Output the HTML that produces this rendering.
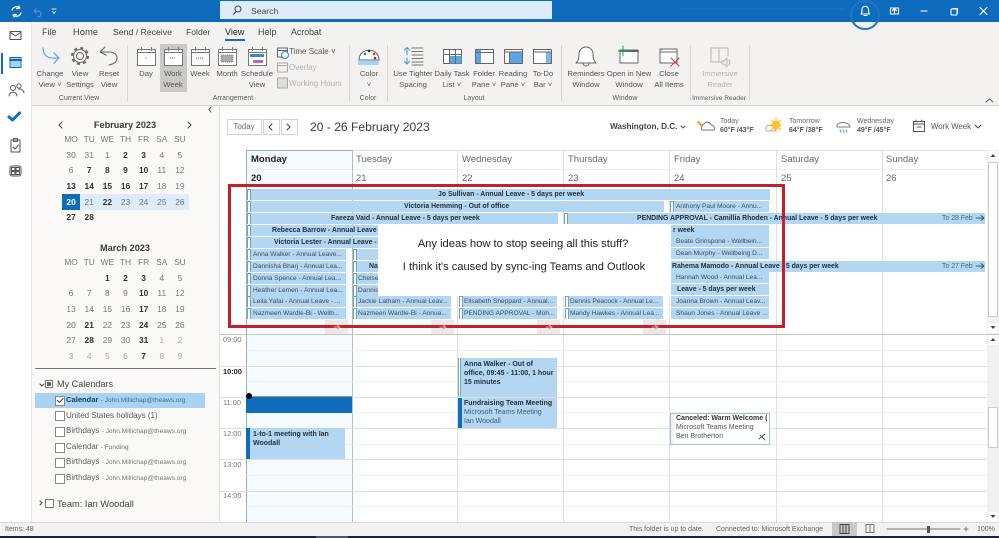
<!DOCTYPE html>
<html><head><meta charset="utf-8"><style>
html,body{margin:0;padding:0;background:#fff}
#p{position:relative;width:999px;height:538px;overflow:hidden;font-family:"Liberation Sans",sans-serif;color:#444;background:#fff;filter:blur(.3px)}
#p div{position:absolute}
.t{position:absolute;white-space:nowrap;line-height:12px}
.c{transform:translateX(-50%);text-align:center}
.tab{font-size:9px;top:26px;color:#444}
.r{font-size:7.7px;color:#555;line-height:11px;text-align:center;transform:translateX(-50%);white-space:nowrap}
.gl{font-size:7px;top:93px;color:#605e5c}
.dis{color:#b5b3b1}
.m{display:flex;left:62px;width:127px;height:15px;font-size:8.4px;color:#777;line-height:15px;text-align:center}
.m span,.m b{flex:1}
.m b{color:#323130}
.m i{flex:1;font-style:normal;color:#aaa}
.h{font-size:9.5px;top:154px;color:#666}
.d{font-size:9.5px;top:173px;color:#666}
.ln{background:#e1dfdd}
.b{background:#b3d7f3;height:11px;overflow:hidden;font-size:6.6px;line-height:11px;color:#3c4c5c;white-space:nowrap}
.bb{font-weight:bold;color:#22303e;font-size:6.9px}
.k{left:0;top:0;width:2px;height:10px;background:#fff;border:1px solid #6fa3b5;box-sizing:content-box}
.tm{font-size:7.4px;left:223px;color:#777}
.cal{font-size:8px;left:66px;color:#605e5c}
.cal small{font-size:6.6px;color:#7a7876}
.cb{left:55px;width:8px;height:8px;border:1px solid #8a8886;background:#fff}
.st{font-size:7px;top:524px;color:#666}
.ev{font-size:7px;line-height:9px;color:#22303e}
</style></head><body><div id="p">

<!-- title bar -->
<div style="left:0;top:0;width:999px;height:22px;background:#0f6cbd"></div>
<div style="left:220px;top:1px;width:332px;height:18px;background:#deecf9"></div>
<div class="t" style="left:251px;top:5px;font-size:8.6px;color:#444">Search</div>

<!-- rail -->
<div style="left:0;top:22px;width:31px;height:500px;background:#fff"></div>
<div style="left:31px;top:22px;width:1px;height:500px;background:#e6e4e2"></div>
<div style="left:1px;top:53px;width:2px;height:21px;background:#0f6cbd"></div>

<!-- ribbon -->
<div style="left:32px;top:22px;width:967px;height:83px;background:#f3f2f1"></div>
<div style="left:32px;top:105px;width:967px;height:1px;background:#d2d0ce"></div>
<div style="left:225px;top:39px;width:20px;height:2px;background:#106ebe"></div>
<div class="t tab" style="left:42px">File</div>
<div class="t tab" style="left:73px;font-size:9.4px">Home</div>
<div class="t tab" style="left:113px;font-size:8.7px">Send / Receive</div>
<div class="t tab" style="left:186px;font-size:8.6px">Folder</div>
<div class="t tab" style="left:225px;color:#222">View</div>
<div class="t tab" style="left:258px">Help</div>
<div class="t tab" style="left:291px;font-size:8.8px">Acrobat</div>

<div style="left:160px;top:44px;width:27px;height:48px;background:#cbc9c7"></div>
<div class="ln" style="left:127px;top:45px;width:1px;height:56px;background:#d8d6d4"></div>
<div class="ln" style="left:349px;top:45px;width:1px;height:56px;background:#d8d6d4"></div>
<div class="ln" style="left:387px;top:45px;width:1px;height:56px;background:#d8d6d4"></div>
<div class="ln" style="left:561px;top:45px;width:1px;height:56px;background:#d8d6d4"></div>
<div class="ln" style="left:690px;top:45px;width:1px;height:56px;background:#d8d6d4"></div>
<div class="ln" style="left:749px;top:45px;width:1px;height:56px;background:#d8d6d4"></div>

<div class="r" style="left:50px;top:68px">Change<br>View ˅</div>
<div class="r" style="left:80px;top:68px">View<br>Settings</div>
<div class="r" style="left:109px;top:68px">Reset<br>View</div>
<div class="r" style="left:146px;top:68px">Day</div>
<div class="r" style="left:173px;top:68px">Work<br>Week</div>
<div class="r" style="left:200px;top:68px">Week</div>
<div class="r" style="left:227px;top:68px">Month</div>
<div class="r" style="left:257px;top:68px">Schedule<br>View</div>
<div class="t" style="left:289px;top:46px;font-size:8px;color:#555">Time Scale ˅</div>
<div class="t dis" style="left:289px;top:62px;font-size:8px">Overlay</div>
<div class="t dis" style="left:289px;top:78px;font-size:8px">Working Hours</div>
<div class="r" style="left:369px;top:68px">Color<br>˅</div>
<div class="r" style="left:413px;top:68px">Use Tighter<br>Spacing</div>
<div class="r" style="left:452px;top:68px">Daily Task<br>List ˅</div>
<div class="r" style="left:484px;top:68px">Folder<br>Pane ˅</div>
<div class="r" style="left:513px;top:68px">Reading<br>Pane ˅</div>
<div class="r" style="left:543px;top:68px">To-Do<br>Bar ˅</div>
<div class="r" style="left:586px;top:68px">Reminders<br>Window</div>
<div class="r" style="left:629px;top:68px">Open in New<br>Window</div>
<div class="r" style="left:669px;top:68px">Close<br>All Items</div>
<div class="r dis" style="left:720px;top:68px">Immersive<br>Reader</div>
<div class="t gl c" style="left:79px">Current View</div>
<div class="t gl c" style="left:233px">Arrangement</div>
<div class="t gl c" style="left:368px">Color</div>
<div class="t gl c" style="left:474px">Layout</div>
<div class="t gl c" style="left:625px">Window</div>
<div class="t gl c" style="left:719px;font-size:6.6px">Immersive Reader</div>

<!-- sidebar -->
<div style="left:32px;top:106px;width:188px;height:416px;background:#faf9f8"></div>
<div style="left:219px;top:106px;width:1px;height:416px;background:#e1dfdd"></div>
<div class="t c" style="left:125px;top:119px;font-size:9.2px;font-weight:bold;color:#3b3a39">February 2023</div>
<div class="m" style="top:132px"><span>MO</span><span>TU</span><span>WE</span><span>TH</span><span>FR</span><span>SA</span><span>SU</span></div>
<div class="m" style="top:148px"><span>30</span><span>31</span><span>1</span><b>2</b><b>3</b><span>4</span><span>5</span></div>
<div class="m" style="top:163px"><span>6</span><b>7</b><b>8</b><b>9</b><b>10</b><span>11</span><span>12</span></div>
<div class="m" style="top:179px"><b>13</b><b>14</b><b>15</b><b>16</b><b>17</b><span>18</span><span>19</span></div>
<div style="left:62px;top:194px;width:127px;height:16px;background:#deecf9"></div>
<div style="left:62px;top:194px;width:18px;height:16px;background:#0f6cbd"></div>
<div class="m" style="top:195px"><b style="color:#fff">20</b><span>21</span><b>22</b><span>23</span><span>24</span><span>25</span><span>26</span></div>
<div class="m" style="top:210px"><b>27</b><b>28</b><span></span><span></span><span></span><span></span><span></span></div>
<div class="t c" style="left:125px;top:242px;font-size:9.2px;font-weight:bold;color:#3b3a39">March 2023</div>
<div class="m" style="top:255px"><span>MO</span><span>TU</span><span>WE</span><span>TH</span><span>FR</span><span>SA</span><span>SU</span></div>
<div class="m" style="top:271px"><span></span><span></span><b>1</b><b>2</b><b>3</b><span>4</span><span>5</span></div>
<div class="m" style="top:286px"><span>6</span><span>7</span><span>8</span><span>9</span><b>10</b><span>11</span><span>12</span></div>
<div class="m" style="top:302px"><span>13</span><span>14</span><span>15</span><span>16</span><b>17</b><span>18</span><span>19</span></div>
<div class="m" style="top:318px"><span>20</span><b>21</b><span>22</span><span>23</span><b>24</b><span>25</span><span>26</span></div>
<div class="m" style="top:333px"><span>27</span><b>28</b><span>29</span><span>30</span><b>31</b><i>1</i><i>2</i></div>
<div class="m" style="top:349px"><i>3</i><i>4</i><i>5</i><i>6</i><b>7</b><i>8</i><i>9</i></div>
<div style="left:35px;top:368px;width:181px;height:1px;background:#777"></div>

<div class="t" style="left:57px;top:378px;font-size:9.1px;color:#444">My Calendars</div>
<div style="left:35px;top:393px;width:170px;height:15px;background:#a9d3f2"></div>
<div class="cb" style="top:396px"></div><div class="cb" style="top:411px"></div><div class="cb" style="top:427px"></div><div class="cb" style="top:443px"></div><div class="cb" style="top:458px"></div><div class="cb" style="top:474px"></div>
<div class="t cal" style="top:394px;font-weight:bold;color:#1f3a52;font-size:7.6px">Calendar <small style="font-weight:normal;color:#466a88">- John.Millichap@theaws.org</small></div>
<div class="t cal" style="top:410px">United States holidays (1)</div>
<div class="t cal" style="top:425px">Birthdays <small>- John.Millichap@theaws.org</small></div>
<div class="t cal" style="top:441px">Calendar <small>- Funding</small></div>
<div class="t cal" style="top:456px">Birthdays <small>- John.Millichap@theaws.org</small></div>
<div class="t cal" style="top:472px">Birthdays <small>- John.Millichap@theaws.org</small></div>
<div class="t" style="left:57px;top:498px;font-size:9.3px;color:#444">Team: Ian Woodall</div>

<!-- nav row -->
<div style="left:227px;top:119px;width:33px;height:14px;border:1px solid #d5d3d1"></div>
<div style="left:263px;top:119px;width:15px;height:14px;border:1px solid #d5d3d1"></div>
<div style="left:281px;top:119px;width:15px;height:14px;border:1px solid #d5d3d1"></div>
<div class="t c" style="left:244px;top:121px;font-size:8px;color:#666">Today</div>
<div class="t" style="left:310px;top:121px;font-size:12.1px;color:#3b3a39">20 - 26 February 2023</div>
<div class="t" style="left:610px;top:121px;font-size:8.2px;font-weight:bold;color:#444">Washington, D.C.</div>
<div class="t" style="left:720px;top:116px;font-size:7px;color:#666">Today</div>
<div class="t" style="left:720px;top:125px;font-size:7px;font-weight:bold;color:#555">60°F /43°F</div>
<div class="t" style="left:789px;top:116px;font-size:7px;color:#666">Tomorrow</div>
<div class="t" style="left:789px;top:125px;font-size:7px;font-weight:bold;color:#555">64°F /38°F</div>
<div class="t" style="left:857px;top:116px;font-size:7px;color:#666">Wednesday</div>
<div class="t" style="left:857px;top:125px;font-size:7px;font-weight:bold;color:#555">49°F /45°F</div>
<div class="t" style="left:931px;top:121px;font-size:7.8px;color:#555">Work Week</div>

<!-- grid -->
<div style="left:246px;top:150px;width:106px;height:372px;background:#f5faff"></div>
<div style="left:246px;top:150px;width:741px;height:1px;background:#e1dfdd"></div>
<div style="left:246px;top:169px;width:741px;height:1px;background:#eeeeee"></div>
<div style="left:246px;top:150px;width:106px;height:1px;background:#8fb2bd"></div>
<div style="left:246px;top:150px;width:1px;height:372px;background:#8fb2bd"></div>
<div style="left:352px;top:150px;width:1px;height:372px;background:#a9c0c6"></div>
<div class="ln" style="left:457px;top:150px;width:1px;height:372px"></div>
<div class="ln" style="left:563px;top:150px;width:1px;height:372px"></div>
<div class="ln" style="left:669px;top:150px;width:1px;height:372px"></div>
<div class="ln" style="left:776px;top:150px;width:1px;height:372px"></div>
<div class="ln" style="left:882px;top:150px;width:1px;height:372px"></div>
<div class="t h" style="left:251px;font-weight:bold;color:#222">Monday</div>
<div class="t h" style="left:356px">Tuesday</div>
<div class="t h" style="left:462px">Wednesday</div>
<div class="t h" style="left:568px">Thursday</div>
<div class="t h" style="left:674px">Friday</div>
<div class="t h" style="left:781px">Saturday</div>
<div class="t h" style="left:886px">Sunday</div>
<div class="t d" style="left:251px;font-weight:bold;color:#222">20</div>
<div class="t d" style="left:356px">21</div>
<div class="t d" style="left:462px">22</div>
<div class="t d" style="left:568px">23</div>
<div class="t d" style="left:674px">24</div>
<div class="t d" style="left:781px">25</div>
<div class="t d" style="left:886px">26</div>

<!-- more-items buttons -->
<div style="left:325px;top:320px;width:23px;height:14px;background:#ece8e8"></div>
<div style="left:431px;top:320px;width:23px;height:14px;background:#ece8e8"></div>
<div style="left:537px;top:320px;width:23px;height:14px;background:#ece8e8"></div>
<div style="left:643px;top:320px;width:23px;height:14px;background:#ece8e8"></div>

<!-- all day bars -->
<div class="b bb" style="left:247px;top:189px;width:523px"><div class="k"></div><span class="t" style="left:191px;top:0;line-height:11px">Jo Sullivan - Annual Leave - 5 days per week</span></div>
<div class="b bb" style="left:247px;top:201px;width:417px"><div class="k"></div><span class="t" style="left:157px;top:0;line-height:11px">Victoria Hemming - Out of office</span></div>
<div class="b" style="left:670px;top:201px;width:99px"><div class="k"></div><span class="t" style="left:6px;top:0;line-height:11px">Anthony Paul Moore - Annu...</span></div>
<div class="b bb" style="left:247px;top:213px;width:311px"><div class="k"></div><span class="t" style="left:84px;top:0;line-height:11px">Faeeza Vaid - Annual Leave - 5 days per week</span></div>
<div class="b bb" style="left:564px;top:213px;width:421px"><div class="k"></div><span class="t" style="left:73px;top:0;line-height:11px">PENDING APPROVAL - Camillia Rhoden - Annual Leave - 5 days per week</span><span class="t" style="left:378px;top:0;line-height:11px;font-weight:normal;color:#4b6a86">To 28 Feb</span></div>
<div class="b bb" style="left:247px;top:225px;width:522px"><div class="k"></div><span class="t" style="left:25px;top:0;line-height:11px">Rebecca Barrow - Annual Leave - 5 days per week</span><span class="t" style="left:426px;top:0;line-height:11px">r week</span></div>
<div class="b bb" style="left:247px;top:237px;width:131px"><div class="k"></div><span class="t" style="left:27px;top:0;line-height:11px">Victoria Lester - Annual Leave - 4</span></div>
<div class="b" style="left:671px;top:236px;width:98px;height:11px"><span class="t" style="left:5px;top:0;line-height:11px">Beate Grinspone - Wellbein...</span></div>
<div class="b" style="left:671px;top:248px;width:98px"><span class="t" style="left:5px;top:0;line-height:11px">Dean Murphy - Wellbeing D...</span></div>
<div class="b" style="left:247px;top:249px;width:99px"><div class="k"></div><span class="t" style="left:6px;top:0;line-height:11px">Anna Walker - Annual Leave...</span></div>
<div class="b" style="left:353px;top:249px;width:25px"><div class="k"></div></div>
<div class="b" style="left:247px;top:261px;width:99px"><div class="k"></div><span class="t" style="left:6px;top:0;line-height:11px">Dannisha Bharj - Annual Lea...</span></div>
<div class="b bb" style="left:353px;top:261px;width:25px"><div class="k"></div><span class="t" style="left:16px;top:0;line-height:11px">Na</span></div>
<div class="b bb" style="left:671px;top:261px;width:314px"><span class="t" style="left:1px;top:0;line-height:11px">Rahema Mamodo - Annual Leave - 5 days per week</span><span class="t" style="left:271px;top:0;line-height:11px;font-weight:normal;color:#4b6a86">To 27 Feb</span></div>
<div class="b" style="left:247px;top:273px;width:99px"><div class="k"></div><span class="t" style="left:6px;top:0;line-height:11px">Donna Spence - Annual Lea...</span></div>
<div class="b" style="left:353px;top:273px;width:25px"><div class="k"></div><span class="t" style="left:5px;top:0;line-height:11px">Chelsea</span></div>
<div class="b" style="left:671px;top:272px;width:98px"><span class="t" style="left:5px;top:0;line-height:11px">Hannah Wood - Annual Lea...</span></div>
<div class="b" style="left:247px;top:285px;width:99px"><div class="k"></div><span class="t" style="left:6px;top:0;line-height:11px">Heather Lemen - Annual Lea...</span></div>
<div class="b" style="left:353px;top:285px;width:25px"><div class="k"></div><span class="t" style="left:5px;top:0;line-height:11px">Dannisha</span></div>
<div class="b bb" style="left:671px;top:284px;width:98px"><span class="t" style="left:6px;top:0;line-height:11px">Leave - 5 days per week</span></div>
<div class="b" style="left:247px;top:296px;width:99px"><div class="k"></div><span class="t" style="left:6px;top:0;line-height:11px">Leila Yafai - Annual Leave - ...</span></div>
<div class="b" style="left:353px;top:296px;width:98px"><div class="k"></div><span class="t" style="left:5px;top:0;line-height:11px">Jackie Latham - Annual Leav...</span></div>
<div class="b" style="left:459px;top:296px;width:98px"><div class="k"></div><span class="t" style="left:5px;top:0;line-height:11px">Elisabeth Sheppard - Annual...</span></div>
<div class="b" style="left:565px;top:296px;width:98px"><div class="k"></div><span class="t" style="left:5px;top:0;line-height:11px">Dennis Peacock - Annual Le...</span></div>
<div class="b" style="left:671px;top:296px;width:98px"><span class="t" style="left:5px;top:0;line-height:11px">Joanna Brown - Annual Leav...</span></div>
<div class="b" style="left:247px;top:308px;width:99px"><div class="k"></div><span class="t" style="left:6px;top:0;line-height:11px">Nazmeen Wardle-Bi - Wellb...</span></div>
<div class="b" style="left:353px;top:308px;width:98px"><div class="k"></div><span class="t" style="left:5px;top:0;line-height:11px">Nazmeen Wardle-Bi - Annua...</span></div>
<div class="b" style="left:459px;top:308px;width:98px"><div class="k"></div><span class="t" style="left:5px;top:0;line-height:11px">PENDING APPROVAL - Moh...</span></div>
<div class="b" style="left:565px;top:308px;width:98px"><div class="k"></div><span class="t" style="left:5px;top:0;line-height:11px">Mandy Hawkes - Annual Lea...</span></div>
<div class="b" style="left:671px;top:308px;width:98px"><span class="t" style="left:5px;top:0;line-height:11px">Shaun Jones - Annual Leave ...</span></div>

<!-- white overlay -->
<div style="left:378px;top:224px;width:293px;height:72px;background:#fff"></div>
<div class="t c" style="left:523px;top:238px;font-size:11.2px;color:#222">Any ideas how to stop seeing all this stuff?</div>
<div class="t c" style="left:524px;top:261px;font-size:11.1px;color:#222">I think it's caused by sync-ing Teams and Outlook</div>

<!-- time area -->
<div style="left:220px;top:334px;width:767px;height:1px;background:#c8c6c4"></div>
<div class="ln" style="left:220px;top:366px;width:767px;height:1px"></div>
<div class="ln" style="left:220px;top:397px;width:767px;height:1px"></div>
<div class="ln" style="left:220px;top:428px;width:767px;height:1px"></div>
<div class="ln" style="left:220px;top:459px;width:767px;height:1px"></div>
<div class="ln" style="left:220px;top:491px;width:767px;height:1px"></div>
<div style="left:246px;top:350px;width:741px;height:1px;background:#f1f0ef"></div>
<div style="left:246px;top:381px;width:741px;height:1px;background:#f1f0ef"></div>
<div style="left:246px;top:412px;width:741px;height:1px;background:#f1f0ef"></div>
<div style="left:246px;top:444px;width:741px;height:1px;background:#f1f0ef"></div>
<div style="left:246px;top:475px;width:741px;height:1px;background:#f1f0ef"></div>
<div style="left:246px;top:506px;width:741px;height:1px;background:#f1f0ef"></div>
<div class="t tm" style="top:334px">09:00</div>
<div class="t tm" style="top:366px;font-weight:bold;color:#222">10:00</div>
<div class="t tm" style="top:397px">11:00</div>
<div class="t tm" style="top:428px">12:00</div>
<div class="t tm" style="top:459px">13:00</div>
<div class="t tm" style="top:490px">14:00</div>

<div style="left:246px;top:396px;width:106px;height:1px;background:#999"></div>
<div style="left:246px;top:397px;width:106px;height:16px;background:#0f6cbd"></div>
<div style="left:246px;top:393px;width:6px;height:6px;border-radius:50%;background:#000"></div>

<div style="left:246px;top:428px;width:99px;height:31px;background:#b3d7f3"></div>
<div style="left:246px;top:428px;width:4px;height:31px;background:#0f6cbd"></div>
<div class="t ev" style="left:253px;top:430px;font-weight:bold;white-space:normal;width:90px">1-to-1 meeting with Ian Woodall</div>

<div style="left:458px;top:358px;width:99px;height:39px;background:#b3d7f3"></div>
<div style="left:458px;top:358px;width:3px;height:38px;background:#fff;border-right:1px solid #7aa;border-left:1px solid #7aa;box-sizing:border-box"></div>
<div class="t ev" style="left:464px;top:360px;font-weight:bold">Anna Walker - Out of<br>office, 09:45 - 11:00, 1 hour<br>15 minutes</div>
<div style="left:458px;top:398px;width:99px;height:30px;background:#b3d7f3"></div>
<div style="left:458px;top:398px;width:4px;height:30px;background:#0f6cbd"></div>
<div class="t ev" style="left:464px;top:399px;font-weight:bold">Fundraising Team Meeting</div>
<div class="t ev" style="left:464px;top:408px;color:#4b5c6c">Microsoft Teams Meeting</div>
<div class="t ev" style="left:464px;top:417px;color:#4b5c6c">Ian Woodall</div>

<div style="left:670px;top:413px;width:98px;height:30px;background:#fff;border:1px solid #a3c1cf"></div>
<div style="left:671px;top:414px;width:3px;height:30px;background:#eef2f4"></div>
<div class="t ev" style="left:676px;top:414px;font-weight:bold;color:#333;overflow:hidden;width:91px">Canceled: Warm Welcome (</div>
<div class="t ev" style="left:676px;top:423px;color:#555">Microsoft Teams Meeting</div>
<div class="t ev" style="left:676px;top:432px;color:#555">Ben Brotherton</div>

<!-- scrollbars -->
<div style="left:987px;top:150px;width:12px;height:372px;background:#f0f0f0"></div>
<div style="left:988px;top:151px;width:10px;height:10px;background:#fff"></div>
<div style="left:988px;top:162px;width:10px;height:155px;background:#fff;border:1px solid #ccc;box-sizing:border-box"></div>
<div style="left:988px;top:323px;width:10px;height:10px;background:#fff"></div>
<div style="left:987px;top:334px;width:12px;height:1px;background:#c8c6c4"></div>
<div style="left:988px;top:335px;width:10px;height:10px;background:#fff"></div>
<div style="left:988px;top:407px;width:10px;height:41px;background:#fff;border:1px solid #ccc;box-sizing:border-box"></div>
<div style="left:988px;top:512px;width:10px;height:10px;background:#fff"></div>

<!-- red rectangle -->
<div style="left:228px;top:184px;width:551px;height:138px;border:3px solid #c4202c;background:transparent"></div>

<!-- status -->
<div style="left:0;top:522px;width:999px;height:14px;background:#f3f2f1"></div>
<div style="left:0;top:522px;width:999px;height:1px;background:#dedcda"></div>
<div style="left:0;top:536px;width:999px;height:2px;background:#1a2440"></div>
<div style="left:316px;top:536px;width:32px;height:2px;background:#4a5670"></div>
<div style="left:832px;top:522px;width:25px;height:14px;background:#cbc9c7"></div>
<div class="t st" style="left:5px">Items: 48</div>
<div class="t st" style="left:629px">This folder is up to date.</div>
<div class="t st" style="left:716px">Connected to: Microsoft Exchange</div>
<div class="t st" style="left:977px">100%</div>

<!-- icons -->
<svg width="999" height="538" viewBox="0 0 999 538" style="position:absolute;left:0;top:0" fill="none" stroke-linejoin="round" stroke-linecap="round">
<defs>
<g id="ci" stroke="#777" stroke-width="1"><rect x="0" y="2" width="18" height="16" fill="#fff"/><path d="M0 5h18M4 0v3M14 0v3" /></g>
</defs>
<!-- title -->
<g stroke="#fff" stroke-width="1.2"><path d="M20 8a5 5 0 0 0-8 2M13 15a5 5 0 0 0 8-2M19 6v2.5h-2.5M14 17v-2.5h2.5"/></g>
<path d="M36 9l-2 2 2 2M34 11h4a3 3 0 0 1 0 6" stroke="#5b9bd5"/>
<path d="M52 9h4M52.500 11.500l1.500 2 1.500-2" stroke="#cfe3f5"/>
<circle cx="238" cy="9" r="3" stroke="#444"/><path d="M236 11.500l-2.500 3" stroke="#444"/>
<path d="M680 9h165" stroke="#1b76c6"/>
<circle cx="865" cy="15" r="14" stroke="#1b76c6" stroke-width="2"/>
<g stroke="#fff" stroke-width="1.100"><path d="M861 14c1-1 1-2 1-5a3.300 3.300 0 0 1 6.500 0c0 3 0 4 1 5zM864 15.500h3"/>
<rect x="890.500" y="8" width="8" height="6"/><path d="M894.500 13v-4M892.500 10.500l2-2 2 2"/>
<path d="M921 11h6"/><rect x="951" y="9" width="6" height="6" rx="1"/><path d="M953 8.500h4.500v4.500"/>
<path d="M980 7.500l7 7M987 7.500l-7 7" /></g>
<!-- rail -->
<g stroke="#555"><rect x="10" y="31.500" width="11" height="8"/><path d="M10 32l5.500 4 5.500-4"/>
<rect x="10" y="57.500" width="11" height="10" fill="#a9d3f2" stroke="#0f6cbd"/><path d="M10 60h11" stroke="#0f6cbd" stroke-width="2"/>
<circle cx="13" cy="88" r="2.500"/><path d="M9 96c0-5 8-5 8 0"/><circle cx="19" cy="86" r="2.200"/><path d="M19 89c3 0 5 2 5 4"/>
<path d="M11 140h9v12h-9zM13.500 138.500h4v3h-4zM13 147l2 2 3.500-4"/>
<rect x="10" y="166" width="11" height="10" rx="2"/><rect x="11.500" y="167.500" width="3.500" height="3"/><rect x="16" y="167.500" width="3.500" height="3"/><rect x="11.500" y="171.500" width="3.500" height="3"/><rect x="16" y="171.500" width="3.500" height="3"/></g>
<path d="M9 117l3.500 3 7-7" stroke="#0f6cbd" stroke-width="3"/>
<!-- change view/settings/reset -->
<path d="M43 48c0 8 5 11 15 10" stroke="#6fa8dc" stroke-width="1.300"/><path d="M54 53l5 5-5 5" stroke="#6fa8dc" stroke-width="1.300"/>
<circle cx="80" cy="56" r="3.500" stroke="#666"/><circle cx="80" cy="56" r="6.500" stroke="#666"/><circle cx="80" cy="56" r="8" stroke="#666" stroke-width="2" stroke-dasharray="3 3.300" stroke-linecap="butt"/>
<path d="M105 47l-5 5 6 3M100 52h9c5 0 8 2.500 8 6s-3 6-8 7" stroke="#666" stroke-width="1.100"/>
<!-- cal icons -->
<use href="#ci" x="137.500" y="47.500"/><use href="#ci" x="164.500" y="47.500"/><use href="#ci" x="191.500" y="47.500"/><use href="#ci" x="218.500" y="47.500"/><use href="#ci" x="248.500" y="47.500"/>
<path d="M145.500 58h2M170 58h6M196 58h8" stroke="#555" stroke-dasharray="1 1" stroke-linecap="butt"/>
<path d="M221 55h12v7h-12z" fill="#aaa" stroke="#888" stroke-dasharray="1 1" stroke-linecap="butt"/>
<rect x="250" y="54" width="14" height="3" fill="#3a86cf" stroke="none"/><rect x="253" y="60" width="10" height="3" fill="#b26bb5" stroke="none"/>
<g stroke="#666"><rect x="277.500" y="48" width="10" height="9"/><path d="M277.500 50.500h10"/><circle cx="285" cy="55" r="3.500" fill="#f3f2f1" stroke="#3a86cf"/></g>
<g stroke="#aaa"><rect x="277.500" y="63" width="10" height="9"/><path d="M277.500 65.500h10"/><rect x="277.500" y="78" width="10" height="10" fill="#ddd"/></g>
<!-- color -->
<path d="M359 60c0-13 20-13 20 0z" fill="#fff" stroke="#666"/><rect x="358" y="61" width="21" height="4" fill="#a9d3f2" stroke="none"/><g stroke="none"><circle cx="365" cy="54" r="1.300" fill="#2b7cd3"/><circle cx="369" cy="51" r="1.300" fill="#333"/><circle cx="374" cy="54" r="1.300" fill="#d83b01"/><circle cx="375" cy="58" r="1.300" fill="#a4262c"/></g>
<!-- tighter -->
<path d="M407 48v7M404.500 50l2.500-2.500 2.500 2.500M407 58v6M404.500 61.500l2.500 2.500 2.500-2.500" stroke="#3a9bd5"/>
<path d="M412 48h11M412 51.500h11M412 55h11M412 58.500h11M412 62h11M412 65h11" stroke="#777"/>
<!-- layout -->
<g stroke="#666"><rect x="443.500" y="49.500" width="18" height="14" fill="#fff"/><rect x="449" y="56" width="12.500" height="7.500" fill="#5ea4e3" stroke="none"/><path d="M443.500 54.500h18M449.500 49.500v14M455.500 49.500v14"/>
<rect x="475.500" y="49.500" width="18" height="14" fill="#fff"/><rect x="476" y="50" width="5" height="13" fill="#5ea4e3" stroke="none"/><path d="M475.500 52.500h18"/>
<rect x="504.500" y="49.500" width="18" height="14" fill="#fff"/><rect x="510" y="52" width="12" height="11" fill="#5ea4e3" stroke="none"/><path d="M504.500 52h18M509.500 52v11"/>
<rect x="533.500" y="49.500" width="18" height="14" fill="#fff"/><rect x="546" y="52" width="5" height="11" fill="#7fb5e6" stroke="none"/><path d="M533.500 52h18"/></g>
<!-- window -->
<path d="M576 63c2-2 3-4 3-9a7 7 0 0 1 14 0c0 5 1 7 3 9zM583 63c0 4 6 4 6 0" stroke="#666" fill="#fff"/>
<rect x="620" y="50" width="18" height="13" fill="#fff" stroke="#666"/><path d="M620 51h18" stroke="#666" stroke-width="2"/><path d="M623 46v10M618 51h10" stroke="#2e9e4d"/>
<rect x="660" y="49" width="17" height="14" fill="#fff" stroke="#666"/><path d="M660 52h17M662 50v-1" stroke="#666"/><path d="M671 58l8 8M679 58l-8 8" stroke="#d13438"/>
<!-- immersive -->
<path d="M711 48h8v14h-8zM719 48h9v8M719 62h2" stroke="#b8b6b4"/><path d="M722 61h2l3-3v9l-3-3h-2zM729 60c1 1 1 3 0 5" stroke="#b8b6b4"/>
<path d="M986 102l3.500-3 3.500 3" stroke="#555"/>
<!-- sidebar -->
<path d="M62 122l-3 3 3 3M188 122l3 3-3 3M211 107l-2 2.500 2 2.500" stroke="#444"/>
<path d="M40 384l2 2 2-2" stroke="#444"/><rect x="45.500" y="380.500" width="7" height="7" fill="#fff" stroke="#777"/><rect x="47" y="382" width="4" height="4" fill="#666" stroke="none"/>
<path d="M57.500 400.500l2 2 3.500-4" stroke="#444"/>
<path d="M40 501l2 2-2 2" stroke="#444"/><rect x="45.500" y="499.500" width="8" height="8" fill="#fff" stroke="#777"/>
<!-- nav -->
<path d="M272 124l-3 3 3 3M287 124l3 3-3 3" stroke="#444"/>
<path d="M681 126l2 2 2-2" stroke="#555"/>
<path d="M702 130a4 4 0 0 1 2-6c2-3 6-2 7 1 3 0 4 3 3 5z" fill="#fff" stroke="#777"/><path d="M698 122l4 4" stroke="#e3a21a" stroke-width="2"/>
<path d="M767 131h7a3 3 0 0 0 0-5h-3a3 3 0 0 0-4 5z" fill="#fff" stroke="#aaa"/><circle cx="776" cy="125" r="4" fill="#fdc232" stroke="#fdc232" /><path d="M776 118v14M769 125h13M771 120l10 10M781 120l-10 10" stroke="#fdc232"/>
<path d="M837 127c-1-6 12-6 13 0z" fill="#fff" stroke="#777"/><path d="M840 130l1 2M843 130l1 2M846 130l1 2" stroke="#3a9bd5"/>
<rect x="913.500" y="121.500" width="11" height="10" stroke="#555"/><path d="M913.500 124h11M916 120v2M922 120v2M917 127h4" stroke="#555"/>
<path d="M975 125l3 3 3-3" stroke="#444"/>
<!-- scroll arrows -->
<g fill="#444" stroke="none"><path d="M990.500 157l2.500-3 2.500 3zM990.500 326l2.500 3 2.500-3zM990.500 341l2.500-3 2.500 3zM990.500 515l2.500 3 2.500-3z"/></g>
<!-- to arrows -->
<path d="M976 218h8M981 215.500l3 2.500-3 2.500M976 266h8M981 263.500l3 2.500-3 2.500" stroke="#33577a"/>
<!-- more arrows -->
<path d="M334 327h6M337 325l3 2-3 2M440 327h6M443 325l3 2-3 2M546 327h6M549 325l3 2-3 2M652 327h6M655 325l3 2-3 2" stroke="#d9a0a0"/>
<!-- recurring -->
<path d="M759 439l6-5M760 435l5 5" stroke="#555"/>
<!-- status -->
<rect x="840" y="524.500" width="9" height="9" stroke="#444"/><path d="M843 524.500v9M846 524.500v9" stroke="#444"/>
<rect x="866" y="524.500" width="8" height="8" stroke="#777"/><path d="M870 524.500v8" stroke="#777"/>
<path d="M887 529h73" stroke="#777"/><rect x="927" y="526" width="3" height="7" fill="#555" stroke="none"/><path d="M888 529h3M964 529h4M966 527v4" stroke="#777"/>
</svg>
</div></body></html>
